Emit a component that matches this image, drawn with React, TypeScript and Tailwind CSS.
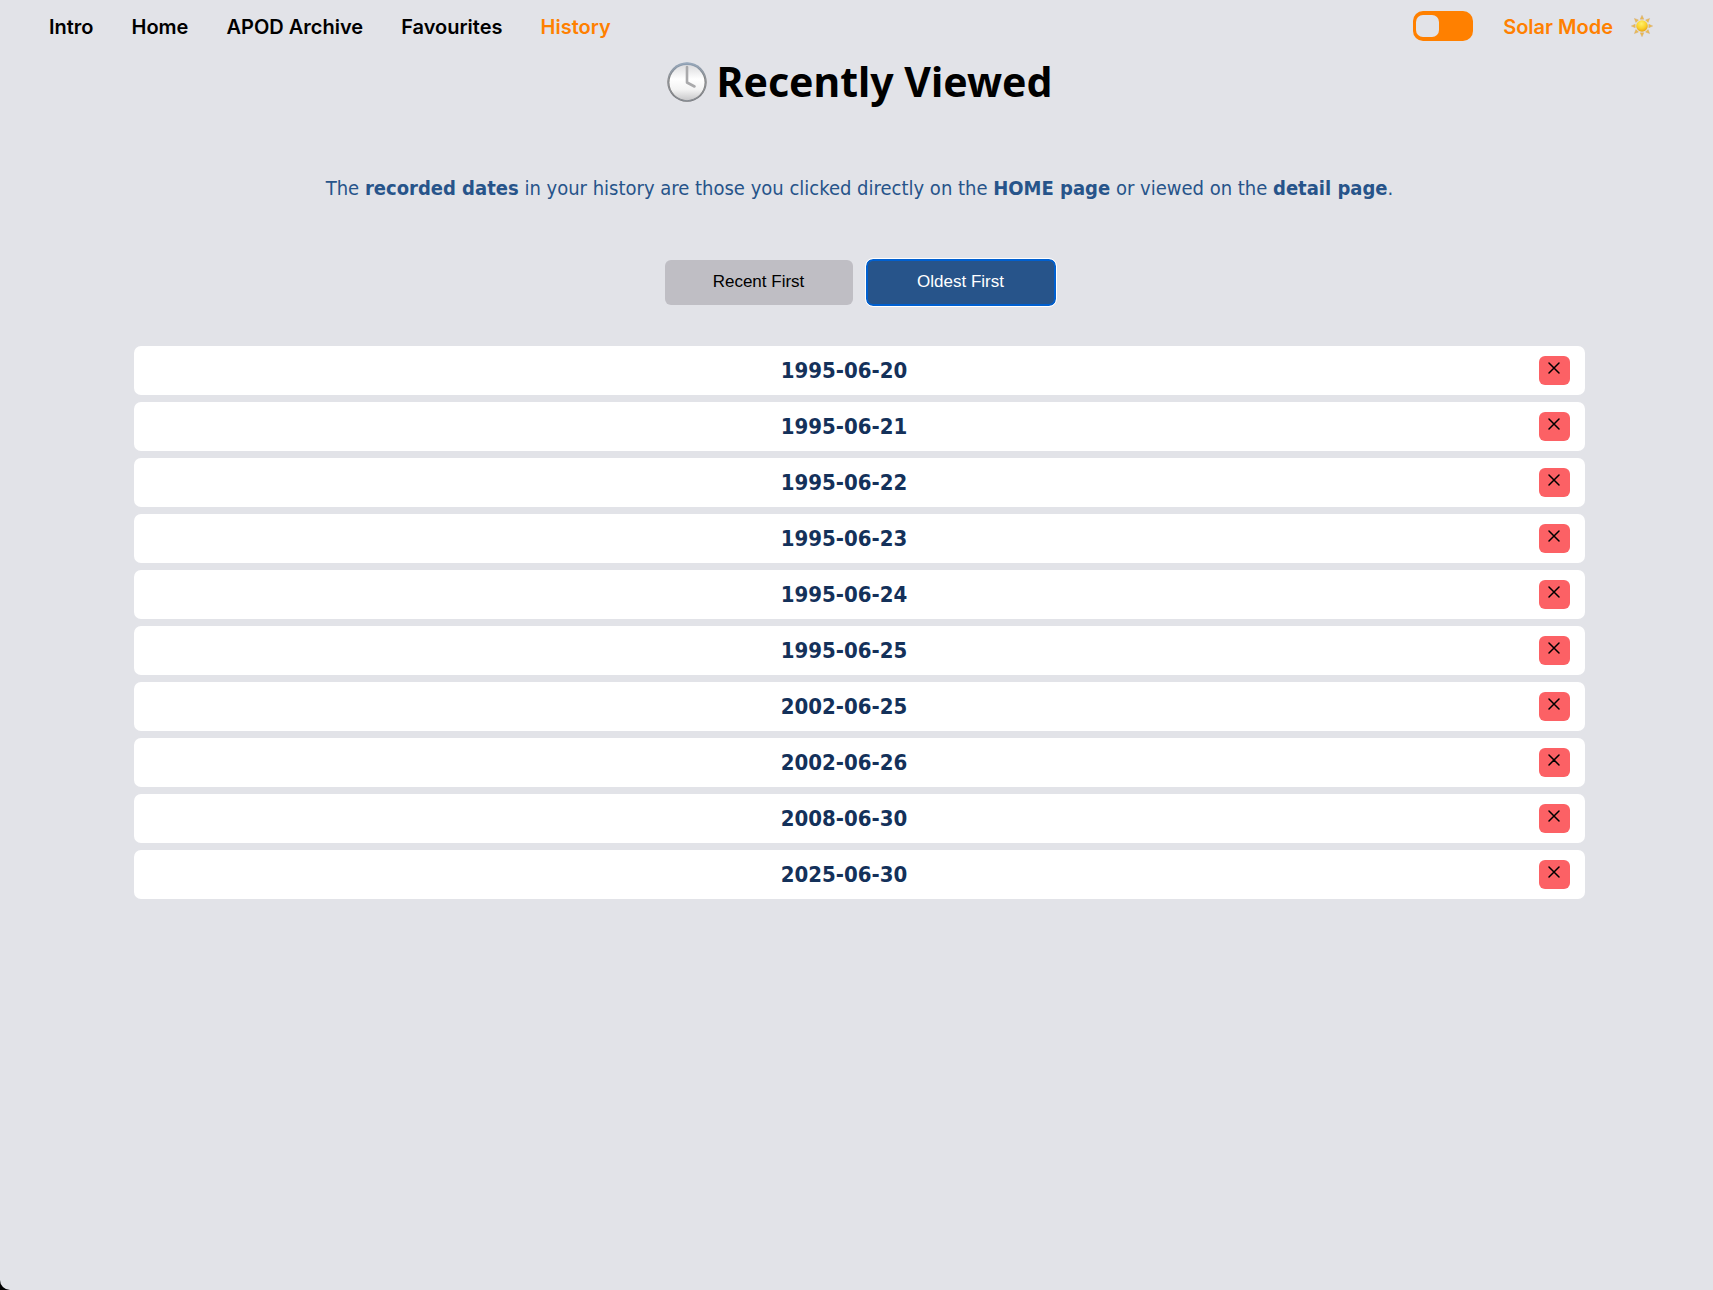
import { useState } from "react";

const links = ["Intro", "Home", "APOD Archive", "Favourites", "History"];

const initialDates = [
  "1995-06-20",
  "1995-06-21",
  "1995-06-22",
  "1995-06-23",
  "1995-06-24",
  "1995-06-25",
  "2002-06-25",
  "2002-06-26",
  "2008-06-30",
  "2025-06-30",
];

function ClockIcon() {
  return (
    <svg className="h-10 w-10 shrink-0" viewBox="0 0 40 40" aria-hidden="true">
      <defs>
        <linearGradient id="clock-rim" x1="0" y1="0" x2="0" y2="1">
          <stop offset="0" stopColor="#8fa3ba" />
          <stop offset="0.45" stopColor="#7d7a78" />
          <stop offset="1" stopColor="#6c6c6f" />
        </linearGradient>
        <linearGradient id="clock-face" x1="0" y1="0" x2="0" y2="1">
          <stop offset="0" stopColor="#dcdcde" />
          <stop offset="0.4" stopColor="#ffffff" />
          <stop offset="0.7" stopColor="#f3f3f3" />
          <stop offset="1" stopColor="#c8c8ca" />
        </linearGradient>
      </defs>
      <circle cx="20" cy="20" r="19.7" fill="url(#clock-rim)" />
      <circle cx="20" cy="20" r="18.8" fill="none" stroke="#a9b4c0" strokeWidth="0.5" />
      <circle cx="20" cy="20.6" r="17.6" fill="url(#clock-face)" />
      <path d="M20 5V20.5L27.5 24.5" fill="none" stroke="#a9a9ab" strokeWidth="2.6" strokeLinecap="round" strokeLinejoin="round" />
    </svg>
  );
}

function SunIcon() {
  return (
    <svg className="h-[22px] w-[22px] shrink-0" viewBox="-11 -11 22 22" aria-hidden="true">
      <defs>
        <radialGradient id="sun-core" cx="0.45" cy="0.3" r="0.75">
          <stop offset="0" stopColor="#fff06a" />
          <stop offset="0.55" stopColor="#fbd22c" />
          <stop offset="1" stopColor="#e29a14" />
        </radialGradient>
      </defs>
      <g fill="#eebc4a" stroke="#cfa673" strokeWidth="0.4">
        {[0, 45, 90, 135, 180, 225, 270, 315].map((angle) => (
          <path key={angle} d="M0 -10.7L1.8 -6.8H-1.8Z" transform={`rotate(${angle})`} />
        ))}
      </g>
      <circle r="5.8" fill="url(#sun-core)" />
    </svg>
  );
}

function CrossIcon() {
  return (
    <svg className="h-3 w-3" viewBox="0 0 12 12" aria-hidden="true">
      <path d="M1 1L11 11M11 1L1 11" fill="none" stroke="#000" strokeWidth="1.5" strokeLinecap="round" />
    </svg>
  );
}

export default function App() {
  const [dates, setDates] = useState(initialDates);
  const [oldestFirst, setOldestFirst] = useState(true);
  const shown = oldestFirst ? dates : [...dates].reverse();

  return (
    <div className="bg-black">
      <div className="min-h-screen rounded-bl-[10px] bg-[#e2e3e8] font-['DejaVu_Sans_Condensed','DejaVu_Sans',sans-serif]">
        <header className="flex h-[52px] items-center justify-between pr-[60px] pl-[49px] font-['Inter',sans-serif] text-[20px] font-semibold">
          <nav className="flex gap-[38px] pt-[2px]">
            {links.map((label) => (
              <a key={label} href="#" className={label === "History" ? "text-[#ff8000]" : "text-black"}>
                {label}
              </a>
            ))}
          </nav>
          <div className="flex items-center text-[#ff8000]">
            <label className="flex cursor-pointer items-center gap-[30px]">
              <span className="flex h-[30px] w-[60px] items-center rounded-[10px] bg-[#ff8000] px-[3px] has-checked:justify-end">
                <input type="checkbox" className="sr-only" />
                <span className="h-[22px] w-[23px] rounded-[7px] bg-[#e2e3e8]" />
              </span>
              <span className="pt-[2px]">Solar Mode</span>
            </label>
            <span className="ml-[18px]">
              <SunIcon />
            </span>
          </div>
        </header>

        <main className="flex flex-col items-center pl-[6px]">
          <h1 className="flex h-[60px] items-center gap-[10px] font-['Noto_Sans',sans-serif] text-[41px] font-bold text-black">
            <ClockIcon />
            Recently Viewed
          </h1>

          <p className="mt-[60px] text-[20px] leading-8 text-[#27548a]">
            The <strong>recorded dates</strong> in your history are those you clicked directly on the{" "}
            <strong>HOME page</strong> or viewed on the <strong>detail page</strong>.
          </p>

          <div className="mt-14 flex gap-[14px] font-['Liberation_Sans',sans-serif] text-[17px]">
            <button
              type="button"
              onClick={() => setOldestFirst(false)}
              className="h-[45px] w-[188px] rounded-[6px] bg-[#bfbec4] pb-[2px] text-black"
            >
              Recent First
            </button>
            <button
              type="button"
              onClick={() => setOldestFirst(true)}
              className="h-[45px] w-[188px] rounded-[6px] border border-[#0060d0] bg-[#27548a] pb-[2px] text-white ring-1 ring-[#0060d0] outline-1 outline-offset-1 outline-white"
            >
              Oldest First
            </button>
          </div>

          <ul className="mt-[41px] flex w-[85%] flex-col gap-[7px]">
            {shown.map((date) => (
              <li key={date} className="flex h-[49px] items-center rounded-[7px] bg-white px-[15px]">
                <a href="#" className="flex-1 text-center text-[22px] font-bold text-[#14315a]">
                  {date}
                </a>
                <button
                  type="button"
                  aria-label={`Remove ${date}`}
                  onClick={() => setDates(dates.filter((d) => d !== date))}
                  className="flex h-[29px] w-[31px] items-center justify-center rounded-[6px] bg-[#fc6165] pb-[6px]"
                >
                  <CrossIcon />
                </button>
              </li>
            ))}
          </ul>
        </main>
      </div>
    </div>
  );
}
